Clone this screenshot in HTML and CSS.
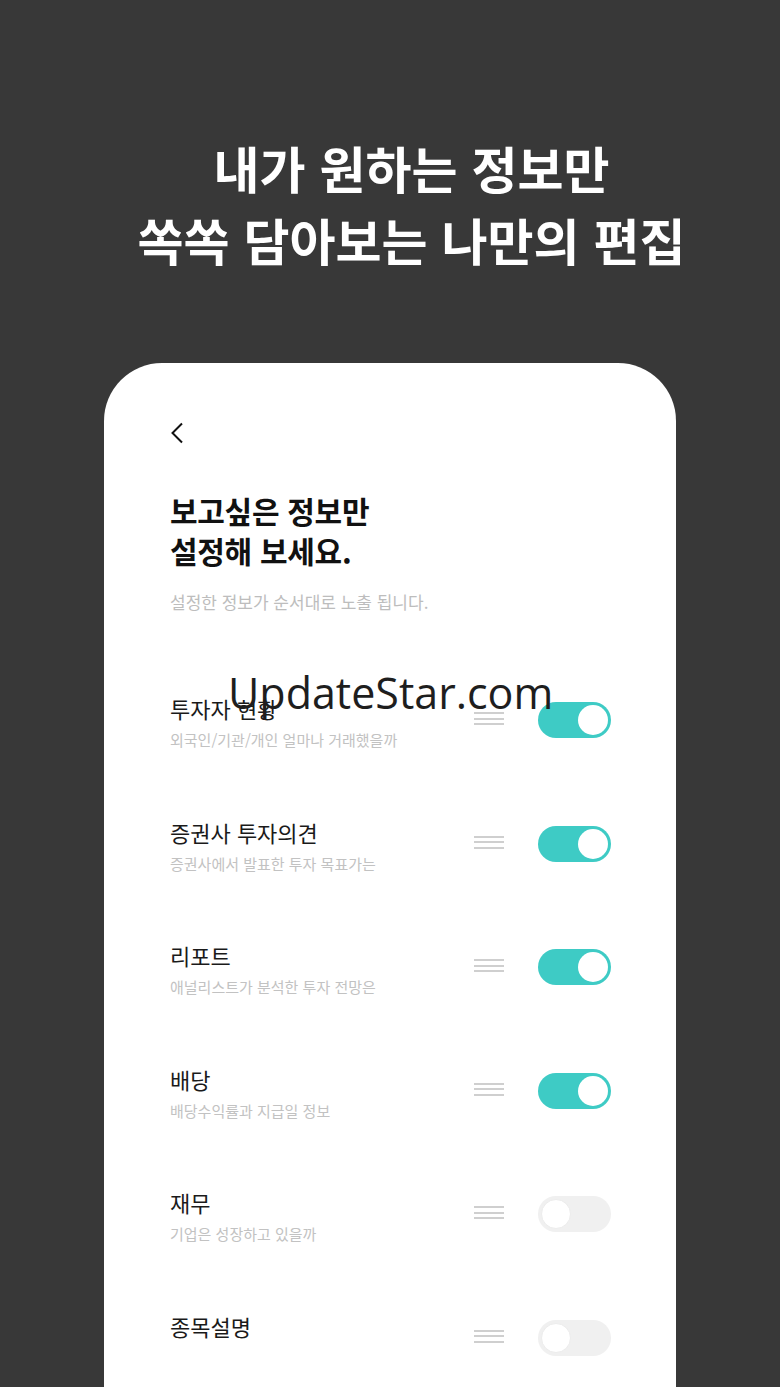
FILE: index.html
```html
<!DOCTYPE html>
<html lang="ko">
<head>
<meta charset="utf-8">
<link rel="stylesheet" href="styles.css">
</head>
<body>
<div class="page">
  <h1 class="hero">내가 원하는 정보만<br>쏙쏙 담아보는 나만의 편집</h1>
  <div class="card">
    <div class="back">
      <svg width="14" height="22" viewBox="0 0 14 22"><path d="M12 1.5 L2.5 11 L12 20.5" fill="none" stroke="#111" stroke-width="2"/></svg>
    </div>
    <h2 class="heading">보고싶은 정보만<br>설정해 보세요.</h2>
    <p class="lead">설정한 정보가 순서대로 노출 됩니다.</p>
    <div class="list">
      <div class="row">
        <div class="text"><div class="title">투자자 현황</div><div class="sub">외국인/기관/개인 얼마나 거래했을까</div></div>
        <div class="drag"><span></span><span></span><span></span></div>
        <div class="toggle on"><span class="knob"></span></div>
      </div>
      <div class="row">
        <div class="text"><div class="title">증권사 투자의견</div><div class="sub">증권사에서 발표한 투자 목표가는</div></div>
        <div class="drag"><span></span><span></span><span></span></div>
        <div class="toggle on"><span class="knob"></span></div>
      </div>
      <div class="row">
        <div class="text"><div class="title">리포트</div><div class="sub">애널리스트가 분석한 투자 전망은</div></div>
        <div class="drag"><span></span><span></span><span></span></div>
        <div class="toggle on"><span class="knob"></span></div>
      </div>
      <div class="row">
        <div class="text"><div class="title">배당</div><div class="sub">배당수익률과 지급일 정보</div></div>
        <div class="drag"><span></span><span></span><span></span></div>
        <div class="toggle on"><span class="knob"></span></div>
      </div>
      <div class="row">
        <div class="text"><div class="title">재무</div><div class="sub">기업은 성장하고 있을까</div></div>
        <div class="drag"><span></span><span></span><span></span></div>
        <div class="toggle"><span class="knob"></span></div>
      </div>
      <div class="row">
        <div class="text"><div class="title">종목설명</div><div class="sub"></div></div>
        <div class="drag"><span></span><span></span><span></span></div>
        <div class="toggle"><span class="knob"></span></div>
      </div>
    </div>
  </div>
  <div class="watermark">UpdateStar.com</div>
</div>
</body>
</html>
```
FILE: styles.css
```css
html, body {
  margin: 0;
  padding: 0;
  background: #383838;
}
body {
  font-family: "Noto Sans CJK KR", "Noto Sans", sans-serif;
  height: 1387px;
  overflow: hidden;
}
.page {
  position: relative;
  height: 1387px;
  overflow: hidden;
}
.hero {
  margin: 0;
  padding: 131px 0 0 43px;
  color: #fff;
  text-align: center;
  font-size: 50px;
  line-height: 72px;
  font-weight: 700;
  letter-spacing: 0;
}
.card {
  margin: 88px 104px 0;
  background: #fff;
  border-radius: 58px 58px 0 0;
  padding: 59px 65px 0 66px;
  height: 1100px;
}
.back {
  height: 22px;
  line-height: 0;
}
.heading {
  margin: 46px 0 0;
  font-size: 30px;
  line-height: 40px;
  font-weight: 700;
  color: #111;
  letter-spacing: -0.3px;
}
.lead {
  margin: 20px 0 0;
  font-size: 17px;
  line-height: 24px;
  color: #bdbdbd;
  letter-spacing: 0;
}
.list {
  margin-top: 79px;
}
.row {
  display: flex;
  align-items: flex-start;
  height: 123.5px;
}
.text {
  flex: 1;
}
.title {
  font-size: 22px;
  line-height: 30px;
  color: #1a1a1a;
  letter-spacing: 0;
}
.sub {
  margin-top: 6px;
  font-size: 15px;
  line-height: 22px;
  color: #c2c2c2;
  letter-spacing: 0;
}
.drag {
  width: 30px;
  margin-top: 19px;
  margin-right: 34px;
  display: flex;
  flex-direction: column;
  gap: 3.5px;
}
.drag span {
  display: block;
  height: 2px;
  background: #cfcfcf;
}
.toggle {
  width: 73px;
  height: 36px;
  margin-top: 9px;
  border-radius: 18px;
  background: #f0f0f0;
  position: relative;
}
.toggle.on {
  background: #3ecbc5;
}
.knob {
  position: absolute;
  top: 3px;
  left: 3px;
  width: 30px;
  height: 30px;
  border-radius: 50%;
  background: #fff;
  box-sizing: border-box;
  border: 1px solid #ececec;
}
.toggle.on .knob {
  left: auto;
  right: 3px;
  border: none;
}
.watermark {
  position: absolute;
  left: 228px;
  top: 665px;
  font-family: "Open Sans", "DejaVu Sans", sans-serif;
  font-size: 43px;
  line-height: 56px;
  color: #1e1e1e;
}
```
